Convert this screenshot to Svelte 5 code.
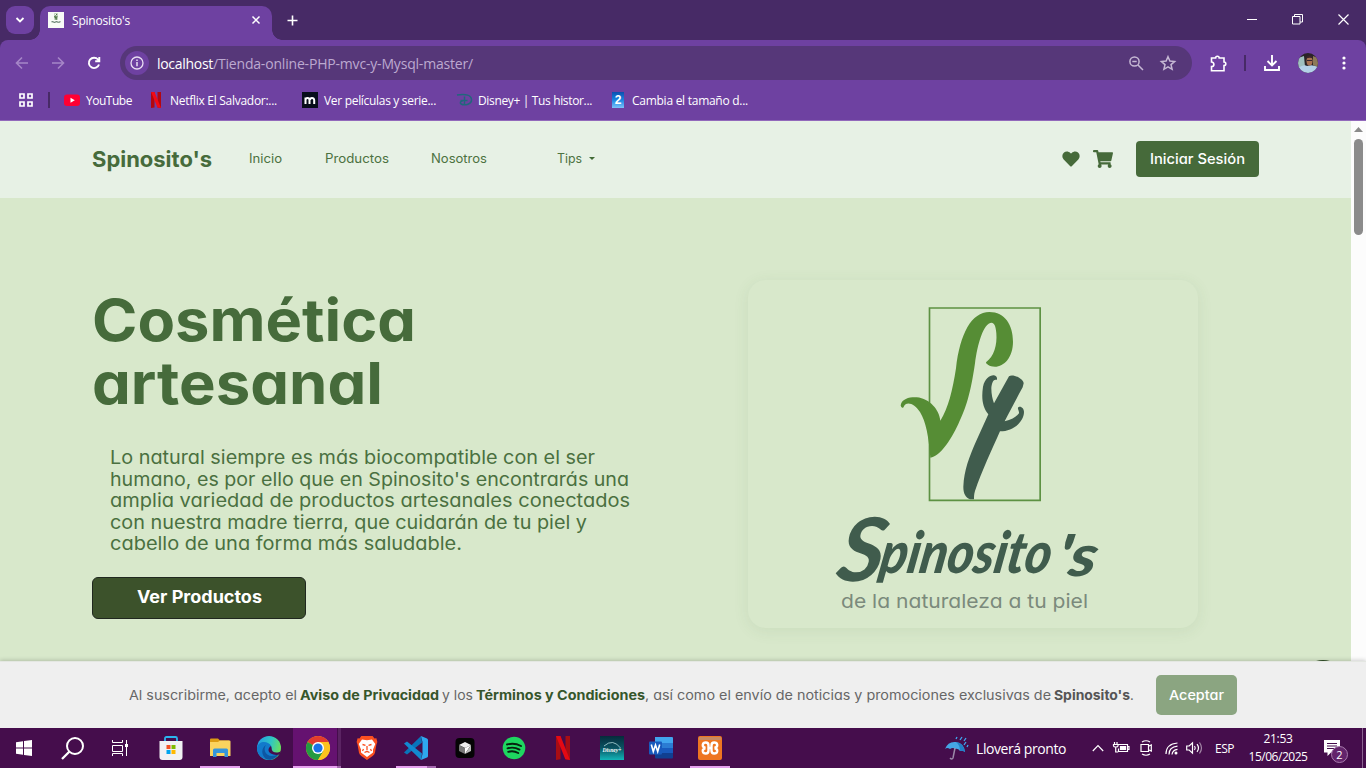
<script>
  // Spreads the letters of a label so that it fills its measured width.
  function fit(node, width) {
    const natural = node.getBoundingClientRect().width;
    node.style.letterSpacing = (width - natural) / node.textContent.length + 'px';
  }

  // Widens the glyphs themselves, for the round geometric face of the shop page.
  function widen(node, width) {
    const natural = node.getBoundingClientRect().width;
    node.style.transform = `scaleX(${width / natural})`;
    node.style.marginRight = width - natural + 'px';
  }

  const bookmarks = [
    { icon: 'youtube', text: 'YouTube', w: 46 },
    { icon: 'netflix', text: 'Netflix El Salvador:...', w: 107 },
    { icon: 'm', text: 'Ver películas y serie...', w: 112 },
    { icon: 'disney', text: 'Disney+ | Tus histor...', w: 114 },
    { icon: 'two', text: 'Cambia el tamaño d...', w: 116 }
  ];

  const intro = [
    ['Lo natural siempre es más biocompatible con el ser', 485],
    ["humano, es por ello que en Spinosito's encontrarás una", 519],
    ['amplia variedad de productos artesanales conectados', 520],
    ['con nuestra madre tierra, que cuidarán de tu piel y', 477],
    ['cabello de una forma más saludable.', 352]
  ];

  const apps = [
    { id: 'store' },
    { id: 'files', line: 'full' },
    { id: 'edge' },
    { id: 'chrome', line: 'active' },
    { id: 'brave' },
    { id: 'code', line: 'multi' },
    { id: 'cursor' },
    { id: 'spotify' },
    { id: 'netflix' },
    { id: 'disney' },
    { id: 'word' },
    { id: 'xampp', line: 'full' }
  ];
</script>

{#snippet appIcon(id)}
  <svg width="24" height="24" viewBox="0 0 24 24">
    {#if id === 'store'}
      <path d="M6 5V2.500Q6 1 7.500 1h9Q18 1 18 2.500V5" fill="none" stroke="#2bb5ee" stroke-width="1.800" />
      <path d="M.5 5h23v16q0 3-3 3h-17q-3 0-3-3z" fill="#f1f1f3" />
      <path d="M7.500 9h4v4h-4z" fill="#f25022" /><path d="M12.500 9h4v4h-4z" fill="#7fba00" />
      <path d="M7.500 14h4v4h-4z" fill="#00a4ef" /><path d="M12.500 14h4v4h-4z" fill="#ffb900" />
    {:else if id === 'files'}
      <path d="M2 3.500q0-1 1-1h7l2 2h9v4H2z" fill="#dc9c13" />
      <path d="M2 6h8l2-1.500h9.500q1 0 1 1V20H2z" fill="#fbd35e" />
      <path d="M5 21v-7q0-1.500 1.500-1.500h12q1.500 0 1.500 1.500v7h-3.500v-4h-8v4z" fill="#3695db" />
    {:else if id === 'edge'}
      <defs>
        <linearGradient id="edgeTop" x1="0" x2="1" y1=".2" y2=".5"><stop stop-color="#239ce5" /><stop offset=".55" stop-color="#30c6c4" /><stop offset="1" stop-color="#6be15b" /></linearGradient>
      </defs>
      <circle cx="12" cy="12" r="12" fill="url(#edgeTop)" />
      <path d="M0 12C1 6 7 5 11 7c3 1.500 4 4 3.500 6-.5 3 2 5 8 3.500C19 23 13 25 8 23 3 21 0 17 0 12z" fill="#127acb" />
      <path d="M9 9c-3 4-1 11 6 11 3 0 5-1 7-2.500C19 23 13 25 9 23 4 19 4 12 9 9z" fill="#0d57a3" />
      <path d="M14.500 12c0 3 2 4.500 5 4.500 2 0 3-.5 4.500-1.500l-1.500 3.500c-5 1.500-11-1-11-4.500 0-2 1-3 2.500-4z" fill="#450d4c" />
    {:else if id === 'chrome'}
      <circle cx="12" cy="12" r="12" fill="#fcc31e" />
      <path d="M12 12 1.600 6A12 12 0 0 1 22.400 6z" fill="#e33b2e" />
      <path d="M12 12 1.600 6A12 12 0 0 0 12 24l5.500-9z" fill="#249a42" />
      <path d="M12 6h10.400a12 12 0 0 1-10.400 18l5.500-9z" fill="#fcc31e" />
      <circle cx="12" cy="12" r="6" fill="#fff" /><circle cx="12" cy="12" r="4.600" fill="#1a73e8" />
    {:else if id === 'brave'}
      <path d="M6 0h12l2 2.500 2-.2L23 6l-1 3-1.500 8q-.5 2-2.500 3.500L12 24.500 6 20.500Q4 19 3.500 17L2 9 1 6l1-3.700 2 .2z" transform="translate(.7 0) scale(.94 .98)" fill="#fa5020" />
      <path d="M7 3.500l5 .8 5-.8 3.300 4.500L18 13.500v3l-6 4.500-6-4.500v-3L3.700 8z" fill="#fff" />
      <path d="M7.500 8.500l3 .8M16.500 8.500l-3 .8M12 10v4M8.500 13l-1 2M15.500 13l1 2M9.500 16.500l2.500-1.200 2.500 1.200" fill="none" stroke="#fa5020" stroke-width="1.300" />
    {:else if id === 'code'}
      <path d="M17 0 18 6.500 3 18.500 0 16.500z" fill="#0874ba" />
      <path d="M0 7.500 3 5.500 18 17.500 17 24z" fill="#1289d0" />
      <path d="M17 0l6 2.500q1 .5 1 1.500v16q0 1-1 1.500L17 24l1.500-6V6z" fill="#2ea8ef" />
    {:else if id === 'cursor'}
      <rect x="2.500" y="2" width="19" height="20" rx="4" fill="#050505" />
      <path d="M12 6l6 3-6 3-6-3z" fill="#eee" /><path d="M6 9l6 3v6l-6-3z" fill="#777" /><path d="M18 9l-6 9v-6z" fill="#fff" />
      <path d="M18 9v6l-6 3z" fill="#bbb" />
    {:else if id === 'spotify'}
      <circle cx="12" cy="12" r="11.300" fill="#1ed760" />
      <path d="M5 8.500q7.500-2 14 1.500M5.500 12.300q6.500-1.800 12 1.300M6.200 15.800q5.500-1.500 10 1.200" fill="none" stroke="#06220f" stroke-width="1.900" stroke-linecap="round" />
    {:else if id === 'netflix'}
      <path d="M5 0h4.500v23.300L5 24zM14.500 0H19v24l-4.500-.7z" fill="#a80d14" />
      <path d="M5 0h4.500L19 24l-4.700-.7z" fill="#e50914" />
    {:else if id === 'disney'}
      <defs><linearGradient id="disneyBg" x1="0" x2="0" y1="0" y2="1"><stop stop-color="#062b3b" /><stop offset=".5" stop-color="#0a5362" /><stop offset="1" stop-color="#12b5b8" /></linearGradient></defs>
      <path d="M0 0h24v24H0z" fill="url(#disneyBg)" />
      <path d="M4 10Q13 2 20.500 12" fill="none" stroke="#c8eff1" stroke-width=".7" />
      <text x="2.500" y="15.500" class="disney-word" textLength="19" lengthAdjust="spacingAndGlyphs">Disney+</text>
    {:else if id === 'word'}
      <path d="M6 1h17q1 0 1 1v5H6z" fill="#41a5ee" /><path d="M6 7h18v5H6z" fill="#2b7cd3" />
      <path d="M6 12h18v5H6z" fill="#185abd" /><path d="M6 17h18v4.500q0 1-1 1H7q-1 0-1-1z" fill="#103f91" />
      <rect y="5.500" width="13" height="13" rx="1" fill="#185abd" />
      <path d="M2.300 8.500l2 7 2.200-6.500 2.200 6.500 2-7" fill="none" stroke="#fff" stroke-width="1.600" />
    {:else if id === 'xampp'}
      <rect width="24" height="24" rx="2" fill="#ee7621" /><path d="M1 1h22v3H1z" fill="#c68a61" />
      <path d="M7.500 12Q4.500 11 4.800 8.800 5.200 6.500 7.800 6.500q2.700 0 2.700 3V12h3V9.500q0-3 2.700-3 2.600 0 3 2.300.3 2.200-2.700 3.200M7.500 12Q4.500 13 4.800 15.200q.4 2.300 3 2.300 2.700 0 2.700-3V12h3v2.500q0 3 2.700 3 2.600 0 3-2.300.3-2.200-2.700-3.200" fill="none" stroke="#fff" stroke-width="2.400" />
    {/if}
  </svg>
{/snippet}

<div class="screen">
  <header class="titlebar">
    <div class="tab-search">
      <svg width="10" height="8" viewBox="0 0 10 8"><path d="M1.500 2 5 5.500 8.500 2" fill="none" stroke="#fff" stroke-width="1.800" /></svg>
    </div>
    <div class="tab">
      <svg width="16" height="16" viewBox="0 0 16 16">
        <path d="M0 0h16v16H0z" fill="#f8faf7" />
        <path d="M6.500 1.500h3v6h-3z" fill="none" stroke="#a9c0a4" stroke-width=".7" />
        <path d="M6 4.500q1.500 0 1.500 2Q7.500 2 9 2M8 8l1-4" fill="none" stroke="#4a7242" />
        <path d="M3.500 10q1-.7 2 0t2 0 2 0 3-.5" fill="none" stroke="#657f70" stroke-width="1.200" />
      </svg>
      <span class="tab-title" use:fit={58}>Spinosito's</span>
      <svg class="tab-close" width="8" height="8" viewBox="0 0 8 8"><path d="M.5.5l7 7M7.500.5l-7 7" stroke="#fff" stroke-width="1.500" /></svg>
    </div>
    <svg class="tab-new" width="11" height="11" viewBox="0 0 11 11"><path d="M5.500.5v10M.5 5.500h10" stroke="#fff" stroke-width="1.600" /></svg>
    <div class="window-buttons">
      <svg width="10" height="11" viewBox="0 0 10 11"><path d="M0 5.500h10" stroke="#fff" /></svg>
      <svg width="11" height="11" viewBox="0 0 11 11"><path d="M.5 2.500h7.500V10H.5zM2.500 2.500v-2h8v7.500H8" fill="none" stroke="#fff" /></svg>
      <svg width="11" height="11" viewBox="0 0 11 11"><path d="M.5.5l10 10M10.500.5l-10 10" stroke="#fff" stroke-width="1.200" /></svg>
    </div>
  </header>

  <div class="chrome">
    <div class="toolbar">
      <svg class="dim" width="14" height="14" viewBox="0 0 14 14"><path d="M13 7H2M7 1.500 1.500 7 7 12.500" /></svg>
      <svg class="dim forward" width="14" height="14" viewBox="0 0 14 14"><path d="M1 7h11M7 1.500 12.500 7 7 12.500" /></svg>
      <svg class="reload" width="14" height="14" viewBox="0 0 14 14"><path d="M12 8.500A5.200 5.200 0 1 1 11 3.500l1 1.200M12.300 1v4.200H8.200" /></svg>
      <div class="omnibox">
        <div class="site-info">
          <svg width="14" height="14" viewBox="0 0 14 14"><circle cx="7" cy="7" r="6" fill="none" stroke="#e8def2" stroke-width="1.300" /><path d="M7 6v4.200M7 3.600v1.500" stroke="#e8def2" stroke-width="1.500" /></svg>
        </div>
        <span class="host" use:fit={56}>localhost</span><span class="path" use:fit={260}>/Tienda-online-PHP-mvc-y-Mysql-master/</span>
        <svg class="zoom" width="15" height="15" viewBox="0 0 15 15"><circle cx="5.500" cy="5.500" r="4.600" /><path d="M9 9l5 5M3.300 5.500h4.400" /></svg>
        <svg class="star" width="16" height="16" viewBox="0 0 16 16"><path d="M8 1.700l1.900 4.400 4.700.4-3.600 3.100 1.100 4.700L8 11.800l-4.100 2.500L5 9.600 1.400 6.500l4.700-.4z" /></svg>
      </div>
      <svg class="puzzle" width="17" height="17" viewBox="0 0 17 17"><path d="M2 3h3.600q0-1.800 1.800-1.800T9.200 3H14v4q1.800 0 1.800 1.800T14 10.600V15.800H1.500v-4.200q2.400 0 2.400-2.200T1.500 7V3z" fill="none" stroke="#fff" stroke-width="1.600" /></svg>
      <i class="tool-sep"></i>
      <svg class="download" width="16" height="16" viewBox="0 0 16 16"><path d="M8 0v10M3.500 6 8 10.500 12.500 6M1 11v4h14v-4" fill="none" stroke="#fff" stroke-width="1.900" /></svg>
      <svg class="avatar" width="20" height="20" viewBox="0 0 20 20">
        <defs><clipPath id="face"><circle cx="10" cy="10" r="10" /></clipPath></defs>
        <g clip-path="url(#face)"><path d="M0 0h20v20H0z" fill="#2a2427" /><path d="M0 5l6-2 1 11-7 1z" fill="#9fc0bf" /><path d="M15 3l5 2v9l-5-2z" fill="#8c7a58" /><path d="M0 15q6-4 9-2 5-2 11 1v6H0z" fill="#b4d1e8" /><ellipse cx="11.500" cy="8" rx="3" ry="4.500" fill="#a97253" /><path d="M8 5.500q0-3 3.500-3t3.500 3q-3-1.500-7 0z" fill="#38252c" /><path d="M9 7.500h5" stroke="#352731" /></g>
      </svg>
      <svg class="more" width="4" height="14" viewBox="0 0 4 14"><circle cx="2" cy="2" r="1.600" fill="#fff" /><circle cx="2" cy="7" r="1.600" fill="#fff" /><circle cx="2" cy="12" r="1.600" fill="#fff" /></svg>
    </div>
    <div class="bookmarks">
      <svg class="grid-icon" width="14" height="14" viewBox="0 0 14 14"><path d="M1 1h4v4H1zM9 1h4v4H9zM1 9h4v4H1zM9 9h4v4H9z" fill="none" stroke="#fff" stroke-width="1.700" /></svg>
      <i class="mark-sep"></i>
      {#each bookmarks as b}
        <div class="bookmark {b.icon}">
          <svg width="16" height="16" viewBox="0 0 16 16">
            {#if b.icon === 'youtube'}
              <rect y="2.500" width="16" height="11.500" rx="3" fill="#ff0033" /><path d="M6.500 5.700v5l4.300-2.500z" fill="#fff" />
            {:else if b.icon === 'netflix'}
              <path d="M3 0h3.500v15.500L3 16zM9.500 0H13v16l-3.500-.5z" fill="#b20710" /><path d="M3 0h3.500L13 16l-3.500-.5z" fill="#f20a16" />
            {:else if b.icon === 'm'}
              <path d="M0 0h16v16H0z" fill="#080d1b" /><path d="M3.500 12V5.500M3.500 8q0-2 2-2t2 2v4M8 8q0-2 2-2t2.200 2v4" fill="none" stroke="#fff" stroke-width="2" />
            {:else if b.icon === 'disney'}
              <path d="M1 3Q15 1 15.500 7.500C16 12 9 14 5 12q-2-2 2-3.500M8.500 4.500v8M4.500 8.500h7" fill="none" stroke="#20677c" stroke-width="1.500" />
            {:else}
              <defs><linearGradient id="twoBg" x1="0" x2="0" y1="0" y2="1"><stop stop-color="#0b4fae" /><stop offset=".5" stop-color="#1a86e2" /><stop offset="1" stop-color="#7cc3fa" /></linearGradient></defs>
              <path d="M2 0h12v16H2z" fill="url(#twoBg)" /><text x="8" y="12.300" class="two-digit">2</text>
            {/if}
          </svg>
          <span use:fit={b.w}>{b.text}</span>
        </div>
      {/each}
    </div>
  </div>

  <main class="viewport">
    <div class="page">
      <nav class="navbar">
        <span class="brand" use:widen={120}>Spinosito's</span>
        <span class="link inicio" use:widen={33}>Inicio</span>
        <span class="link productos" use:widen={64}>Productos</span>
        <span class="link nosotros" use:widen={56}>Nosotros</span>
        <span class="link tips" use:widen={25}>Tips</span>
        <i class="caret"></i>
        <svg class="heart" width="18" height="16" viewBox="0 0 512 470"><path d="M462 42C408-4 327 5 277 56l-21 21-20-21C186 5 105-4 51 42-12 96-15 191 41 249l193 199c12 13 32 13 44 0l193-199c56-58 53-153-9-207z" fill="#466a3a" /></svg>
        <svg class="cart" width="20" height="18" viewBox="0 0 576 512"><path d="M528 301 575 93c4-15-8-29-23-29H159l-9-45C148 8 138 0 126 0H24C11 0 0 11 0 24v16c0 13 11 24 24 24h70l70 343c-17 10-28 28-28 49 0 31 25 56 56 56s56-25 56-56c0-16-7-30-17-40h210c-10 10-17 24-17 40 0 31 25 56 56 56s56-25 56-56c0-22-13-41-31-50l5-25c4-15-8-29-23-29H218l-7-32h294c11 0 21-8 23-19z" fill="#466a3a" /></svg>
        <button class="login"><span use:widen={95}>Iniciar Sesión</span></button>
      </nav>

      <section class="hero">
        <div class="copy">
          <h1><span use:widen={324}>Cosmética</span><span use:widen={291}>artesanal</span></h1>
          <p>
            {#each intro as [line, width]}<span use:widen={width}>{line}</span>{/each}
          </p>
          <button class="shop"><span use:widen={125}>Ver Productos</span></button>
        </div>
        <div class="card">
          <svg width="450" height="348" viewBox="748 280 450 348">
            <g transform="translate(820 290) scale(.33333)">
              <path d="M328.500 54h332v577h-332z" fill="none" stroke="#5d9143" stroke-width="5" />
              <path d="M331 503C326 440 318 395 300 366C285 343 262 332 252 348C251 356 243 355 242 346C246 325 270 321 290 322C330 326 358 360 361 392C385 355 398 300 408 235C420 130 455 66 508 66C555 66 579 105 579 155C579 202 552 230 525 230C508 230 498 222 498 217C522 200 532 165 529 130C528 108 522 98 515 98C490 98 472 165 465 220C452 310 438 355 415 402C390 455 360 498 331 503z" fill="#568d35" />
              <path d="M567 259C578 250 611 267 611 280L608 292C590 325 570 362 554 394C575 390 590 380 597 370C598 362 590 355 596 351C604 348 612 356 612 366C612 395 580 424 540 424C515 480 485 545 465 603C462 612 462 620 462 628L450 628C436 622 430 610 430 590C432 540 448 500 470 450L505 373C487 350 484 325 489 290C495 265 510 255 522 256C530 258 533 264 530 270C520 265 515 280 514 295C514 315 518 328 522 340z" fill="#405c4d" />
            </g>
            <g transform="translate(0 578) skewX(-10) translate(0 -578)">
              <text class="logo-name" y="581"><tspan class="cap" x="835" textLength="46" lengthAdjust="spacingAndGlyphs">S</tspan><tspan x="877" y="573" textLength="171" lengthAdjust="spacingAndGlyphs">pinosito</tspan><tspan x="1054" y="576" textLength="40" lengthAdjust="spacingAndGlyphs">'s</tspan></text>
            </g>
            <text class="logo-tag" x="841" y="607.500" textLength="247" lengthAdjust="spacingAndGlyphs">de la naturaleza a tu piel</text>
          </svg>
        </div>
        <i class="chat"></i>
      </section>
    </div>
    <div class="scrollbar">
      <svg width="9" height="5" viewBox="0 0 9 5"><path d="M0 5 4.500 0 9 5z" fill="#8a8a8a" /></svg>
      <i></i>
    </div>
  </main>

  <aside class="consent">
    <span use:widen={168}>Al suscribirme, acepto el</span>
    <b class="green" use:widen={139}>Aviso de Privacidad</b>
    <span use:widen={31}>y los</span>
    <b class="green" use:widen={169}>Términos y Condiciones</b><span class="tail" use:widen={406}>, así como el envío de noticias y promociones exclusivas de</span>
    <b use:widen={76}>Spinosito's</b><span class="tail">.</span>
    <button><span use:widen={55}>Aceptar</span></button>
  </aside>

  <footer class="taskbar">
    <div class="sys"><svg width="16" height="16" viewBox="0 0 16 16"><path d="M0 2.200 7 1.200v6.300H0zM8 1l8-1v7.500H8zM0 8.500h7v6.300l-7-1zM8 8.500h8V16l-8-1z" fill="#fff" /></svg></div>
    <div class="sys"><svg width="23" height="23" viewBox="0 0 23 23"><circle cx="14" cy="9" r="8" fill="none" stroke="#fff" stroke-width="2" /><path d="M8.500 14.500 1 22" stroke="#fff" stroke-width="2.300" /></svg></div>
    <div class="sys"><svg width="16" height="16" viewBox="0 0 16 16"><path d="M.5 0v2.500h10V0M.5 5.500h10v6H.5zM.5 16v-2.500h10V16M14.500 0v16" fill="none" stroke="#fff" /><path d="M13 4h3v3h-3z" fill="#fff" /></svg></div>
    {#each apps as app}
      <div class="app {app.line ?? ''}">{@render appIcon(app.id)}</div>
    {/each}
    <svg class="rain" width="26" height="25" viewBox="0 0 26 25">
      <path d="M1 13Q4 5 12 6q8 1 9 10-3-2-5-1-2-3-5-2-2-2-5 0-3-2-5 0z" fill="#45a5e5" /><path d="M12 6q8 1 9 10-3-2-5-1 0-6-4-9z" fill="#237fc7" /><path d="M11 12 9 22q-1 2-3 0" fill="none" stroke="#9b8aa8" stroke-width="1.500" />
      <path d="M12 3l1-2M16 4l2-3M20 5l2-3M20 9l2-3M23 11l1-2" stroke="#41a9f1" stroke-width="1.300" />
    </svg>
    <span class="weather" use:fit={90}>Lloverá pronto</span>
    <svg class="tray up" width="12" height="8" viewBox="0 0 12 8"><path d="M.8 7 6 1.500 11.200 7" /></svg>
    <svg class="tray battery" width="17" height="12" viewBox="0 0 17 12"><path d="M5.500 2.500h9v7h-9v-3M14.500 4.500h1.500v3h-1.500M1.500 0v2M4 0v2M.5 2.500h4.500v1.500q0 1-2.200 1T.5 4zM2.700 5v5h2.500" /><path d="M7.500 4.500h5v3h-5z" fill="#fff" /></svg>
    <svg class="tray meet" width="12" height="16" viewBox="0 0 12 16"><path d="M2 2Q6-.5 10 2M2 14q4 2.500 8 0M1 4.500h7.500v7H1zM9 6l2.300-1v6L9 10" /></svg>
    <svg class="tray wifi" width="13" height="13" viewBox="0 0 13 13"><path d="M1 12Q1 2 12.500 1M4 12.500Q4 5 12.500 4.200M7 12.500Q7.500 8 12.500 7.400" /><circle cx="11" cy="11" r="1.500" fill="#fff" stroke="none" /></svg>
    <svg class="tray sound" width="17" height="12" viewBox="0 0 17 12"><path d="M.7 4h2.500L6.500.8v10.400L3.200 8H.7zM8.500 4q1.500 2 0 4M11 2.200q3 3.800 0 7.600" /><path d="M13.500.5q4 5.500 0 11" opacity=".5" /></svg>
    <span class="lang" use:fit={19}>ESP</span>
    <div class="clock"><span use:fit={29}>21:53</span><span use:fit={59}>15/06/2025</span></div>
    <div class="notify">
      <svg width="16" height="16" viewBox="0 0 16 16"><path d="M0 0h16v12.500H7L3.500 16v-3.500H0z" fill="#fff" /><path d="M3 3.500h10M3 6h10M3 8.500h7" stroke="#450d4c" stroke-width="1" /></svg>
      <span>2</span>
    </div>
    <i class="peek"></i>
  </footer>
</div>

<style>
  :global(body) { margin: 0; overflow: hidden; }
  .screen { width: 1366px; height: 768px; display: grid; grid-template-rows: 40px 81px 540px 67px 40px; font-family: "Open Sans", "Noto Sans", sans-serif; font-size: 12px; color: #fff; background: #472a66; }
  svg { display: block; flex: none; overflow: visible; }
  span, b { white-space: nowrap; flex: none; transform-origin: left center; }
  button { border: 0; padding: 0; display: flex; align-items: center; justify-content: center; font: inherit; font-feature-settings: inherit; flex: none; }

  .titlebar { display: flex; background: #472a66; }
  .tab-search { width: 28px; height: 28px; margin: 6px 6px 0; border-radius: 9px; background: #6e41a1; display: grid; place-items: center; }
  .tab { box-sizing: border-box; position: relative; width: 232px; margin-top: 6px; padding: 0 12px 6px 8px; border-radius: 10px 10px 0 0; background: #6e41a1; display: flex; align-items: center; }
  .tab::before, .tab::after { content: ""; position: absolute; bottom: 0; width: 10px; height: 10px; }
  .tab::before { left: -10px; background: radial-gradient(circle at 0 0, transparent 9.5px, #6e41a1 10px); }
  .tab::after { right: -10px; background: radial-gradient(circle at 100% 0, transparent 9.5px, #6e41a1 10px); }
  .tab-title { margin-left: 8px; }
  .tab-close { margin-left: auto; }
  .tab-new { margin: 15px 0 0 14.500px; }
  .window-buttons { margin: 14px 17.500px 0 auto; display: flex; gap: 35px; }

  .chrome { box-sizing: border-box; background: #6e41a1; border-bottom: 1px solid #9269bb; border-radius: 8px 8px 0 0; }
  .toolbar { height: 46px; display: flex; align-items: center; padding-left: 15px; }
  .dim path { fill: none; stroke: #a586c7; stroke-width: 1.600; }
  .forward { margin-left: 22px; }
  .reload { margin-left: 22px; }
  .reload path { fill: none; stroke: #fff; stroke-width: 1.900; }
  .omnibox { box-sizing: border-box; width: 1072px; height: 34px; margin-left: 19px; padding: 0 16px 0 5px; border-radius: 17px; background: #563779; display: flex; align-items: center; font-size: 14px; }
  .site-info { width: 24px; height: 24px; margin-right: 8px; border-radius: 50%; background: #6e41a1; display: grid; place-items: center; }
  .path { color: #bca9d0; }
  .zoom { margin-left: auto; margin-right: 16px; }
  .zoom, .star { fill: none; stroke: #c6b8d4; stroke-width: 1.500; }
  .puzzle { margin-left: 18px; }
  .tool-sep { width: 2px; height: 16px; margin-left: 17px; background: #472a66; }
  .download { margin-left: 18px; }
  .avatar { margin-left: 18px; }
  .more { margin-left: 24px; }
  .bookmarks { height: 28px; display: flex; align-items: center; padding-left: 19px; }
  .mark-sep { width: 2px; height: 16px; margin: 0 14px 0 15px; background: #472a66; }
  .bookmark { display: flex; align-items: center; gap: 6px; margin-right: 16px; }
  .bookmark.netflix { margin-right: 25px; }
  .bookmark.m { margin-right: 20px; }
  .bookmark.disney { margin-right: 18px; }
  .two-digit { font: bold 12px "Liberation Sans", sans-serif; fill: #fff; text-anchor: middle; }

  .viewport { display: grid; grid-template-columns: 1351px 15px; min-height: 0; overflow: hidden; }
  .page, .consent { font-family: Inter, sans-serif; font-feature-settings: "cv11"; }
  .page { background: #d8e8cb; color: #416a35; }
  .navbar { box-sizing: border-box; height: 77px; padding: 0 0 2px 92px; background: #e7f1e5; display: flex; align-items: center; font-size: 12.500px; color: #4c7241; }
  .brand { font-size: 22px; font-weight: 700; color: #466b3b; }
  .inicio { margin-left: 37px; }
  .productos, .nosotros { margin-left: 42.700px; }
  .tips { margin-left: 70px; }
  .caret { margin: 0 0 0 7px; border: 3px solid transparent; border-top-color: #416a35; border-bottom: 0; }
  .heart { margin-left: 467px; }
  .cart { margin-left: 13px; }
  .login { width: 123px; height: 36px; margin-left: 22.600px; border-radius: 4px; background: #466a3a; color: #fff; font-size: 14.500px; font-weight: 500; }

  .hero { height: 463px; display: flex; position: relative; }
  .copy { width: 538px; padding: 91px 0 0 92px; }
  h1 { margin: 0; font-size: 58px; line-height: 62.500px; font-weight: 700; display: flex; flex-direction: column; align-items: flex-start; color: #466b3b; }
  p { margin: 33px 0 0 18px; display: flex; flex-direction: column; align-items: flex-start; font-size: 18.500px; line-height: 21.600px; color: #4a7040; }
  .shop { box-sizing: border-box; width: 214px; height: 42px; margin-top: 22px; padding-bottom: 2px; border: 1px solid #20281f; border-radius: 6px; background: #3c522b; color: #fff; font-size: 17px; font-weight: 700; }
  .card { width: 450px; height: 348px; margin: 82px 0 0 118px; border-radius: 18px; box-shadow: 0 3px 16px rgba(70, 106, 58, .09); }
  .logo-name { font: italic 900 58px Lato, sans-serif; fill: #405c4d; }
  .logo-name .cap { font-size: 88px; font-weight: 700; }
  .logo-tag { font: 400 19px Inter, sans-serif; font-feature-settings: "cv11"; fill: #7b8a7c; }
  .chat { position: absolute; left: 1299px; top: 462px; width: 48px; height: 48px; border-radius: 50%; background: #304d27; }
  .scrollbar { background: #fcfcfc; display: flex; flex-direction: column; align-items: center; padding-top: 6px; }
  .scrollbar i { width: 9px; height: 96px; margin-top: 7px; border-radius: 5px; background: #8b8b8b; }

  .consent { position: relative; box-sizing: border-box; background: #efefef; box-shadow: 0 -1px 4px rgba(0, 0, 0, .18); border-top: 1px solid #e4e7e2; padding: 0 0 1px 129px; display: flex; align-items: center; gap: 3px; font-size: 13px; color: #666; }
  .consent b { color: #555; }
  .consent b.green { color: #36562b; }
  .consent .tail { margin-left: -3px; }
  .consent button { width: 81px; height: 40px; margin: 1px 0 0 19px; border-radius: 5px; background: #8ba581; color: #fff; font-size: 13.500px; font-weight: 500; }

  .taskbar { position: relative; background: #450d4c; display: flex; align-items: center; }
  .sys { width: 48px; height: 40px; display: grid; place-items: center; flex: none; }
  .app { box-sizing: border-box; width: 49px; height: 40px; display: grid; place-items: center; flex: none; position: relative; }
  .app:nth-child(4) { margin-left: 2px; }
  .app::after { content: ""; position: absolute; bottom: 0; left: 5px; width: 40px; height: 2px; }
  .full::after { background: #e6a0ef; }
  .active { background: linear-gradient(90deg, #651270 0 44px, #450d4c 44px 45px, #5b2463 45px 48px, transparent 48px); }
  .active::after { left: 0; width: 48px; background: linear-gradient(90deg, #e6a0ef 44px, #a668b0 44px); }
  .multi::after { background: linear-gradient(90deg, #e6a0ef 31px, #a668b0 31px); }
  .disney-word { font: italic bold 6px "Liberation Serif", serif; fill: #fff; }
  .rain { margin-left: 210px; }
  .weather { margin-left: 6px; font-size: 14px; }
  .tray { fill: none; stroke: #fff; stroke-width: 1.200; }
  .up { margin-left: 26px; }
  .battery { margin-left: 9px; }
  .meet { margin-left: 10px; }
  .wifi { margin-left: 13px; }
  .sound { margin-left: 8px; }
  .lang { margin-left: 12px; }
  .clock { width: 60px; margin-left: 14px; display: flex; flex-direction: column; align-items: center; line-height: 18px; }
  .notify { position: relative; margin-left: 16px; }
  .notify span { position: absolute; left: 7px; top: 6px; width: 15px; height: 15px; border: 1px solid #a77bad; border-radius: 50%; background: #63246b; font-size: 11px; line-height: 15px; text-align: center; }
  .peek { position: absolute; right: 3px; top: 0; width: 1px; height: 40px; background: #8a6390; }
</style>
